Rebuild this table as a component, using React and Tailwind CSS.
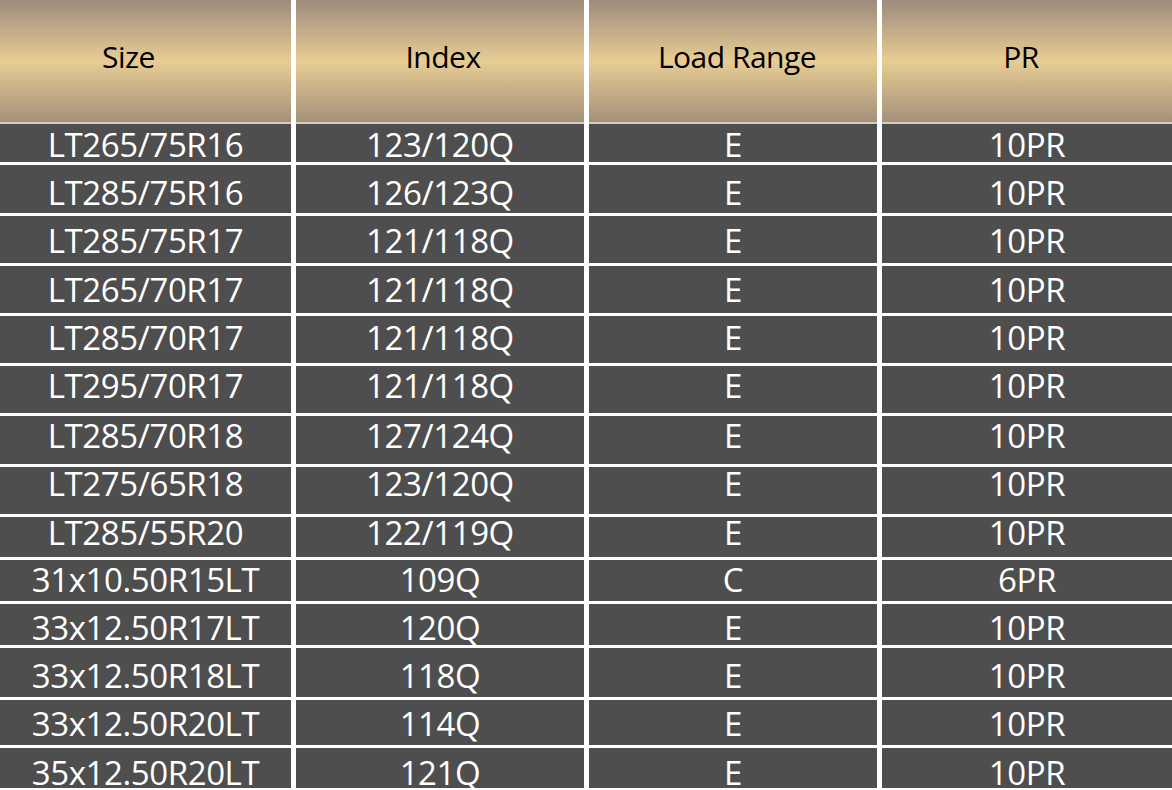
// Tyre size table: gold header, dark rows, white rules

const headers = [
  { label: 'Size', nudge: '-translate-x-[17px]' },
  { label: 'Index', nudge: 'translate-x-[3px]' },
  { label: 'Load Range', nudge: 'translate-x-[4px]' },
  { label: 'PR', nudge: '-translate-x-[6px]' },
];

// h = dark cell height, shift = nudge so text lands on the reference baseline
const rows = [
  { size: 'LT265/75R16', index: '123/120Q', load: 'E', pr: '10PR', h: 'h-[38px]', shift: 'translate-y-[1px]' },
  { size: 'LT285/75R16', index: '126/123Q', load: 'E', pr: '10PR', h: 'h-[48px]', shift: 'translate-y-[3px]' },
  { size: 'LT285/75R17', index: '121/118Q', load: 'E', pr: '10PR', h: 'h-[47px]', shift: 'translate-y-[1px]' },
  { size: 'LT265/70R17', index: '121/118Q', load: 'E', pr: '10PR', h: 'h-[47px]', shift: 'translate-y-0' },
  { size: 'LT285/70R17', index: '121/118Q', load: 'E', pr: '10PR', h: 'h-[47px]', shift: '-translate-y-[2px]' },
  { size: 'LT295/70R17', index: '121/118Q', load: 'E', pr: '10PR', h: 'h-[47px]', shift: '-translate-y-[4px]' },
  { size: 'LT285/70R18', index: '127/124Q', load: 'E', pr: '10PR', h: 'h-[48px]', shift: '-translate-y-[5px]' },
  { size: 'LT275/65R18', index: '123/120Q', load: 'E', pr: '10PR', h: 'h-[47px]', shift: '-translate-y-[7px]' },
  { size: 'LT285/55R20', index: '122/119Q', load: 'E', pr: '10PR', h: 'h-[40px]', shift: '-translate-y-[5px]' },
  { size: '31x10.50R15LT', index: '109Q', load: 'C', pr: '6PR', h: 'h-[41px]', shift: '-translate-y-[1px]' },
  { size: '33x12.50R17LT', index: '120Q', load: 'E', pr: '10PR', h: 'h-[41px]', shift: 'translate-y-[3px]' },
  { size: '33x12.50R18LT', index: '118Q', load: 'E', pr: '10PR', h: 'h-[49px]', shift: 'translate-y-[3px]' },
  { size: '33x12.50R20LT', index: '114Q', load: 'E', pr: '10PR', h: 'h-[45px]', shift: 'translate-y-[1px]' },
  { size: '35x12.50R20LT', index: '121Q', load: 'E', pr: '10PR', h: 'h-[40px]', shift: 'translate-y-[4px]' },
];

const font = "font-['Open_Sans','Liberation_Sans',sans-serif]";
const cols = 'grid grid-cols-[291px_288px_288px_1fr] gap-x-[5px]';

export default function App() {
  return (
    <div className={`w-[1172px] h-[790px] overflow-hidden bg-white ${font}`}>
      {/* Header */}
      <div className={cols}>
        {headers.map((h) => (
          <div
            key={h.label}
            className="h-[124px] flex items-center justify-center border-b-2 border-[#d3cdc4] bg-linear-to-b from-[#9d8b7c] via-[#e7cd94] to-[#a4917a]"
          >
            <span className={`text-[30px] text-black tracking-[-0.5px] -translate-y-[5px] ${h.nudge}`}>{h.label}</span>
          </div>
        ))}
      </div>

      {/* Body */}
      <div className="flex flex-col gap-y-[3px] pb-[2px] border-b-2 border-[#d3d3d3]">
        {rows.map((r) => (
          <div key={r.size} className={cols}>
            {[r.size, r.index, r.load, r.pr].map((v, i) => (
              <div key={i} className={`${r.h} bg-[#4e4e4e] flex items-center justify-center`}>
                <span className={`text-[33px] text-white tracking-[-0.4px] leading-none ${r.shift}`}>{v}</span>
              </div>
            ))}
          </div>
        ))}
      </div>
    </div>
  );
}
